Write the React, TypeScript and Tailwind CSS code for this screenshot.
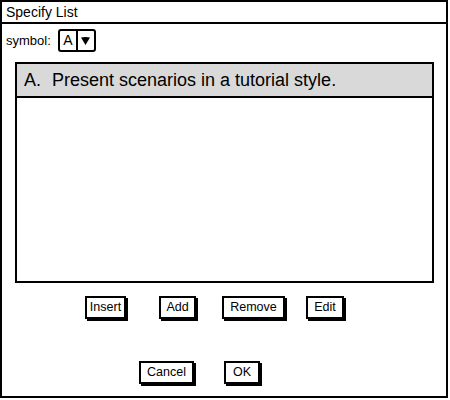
import React from "react";

const SketchButton = ({ label, className = "" }: { label: string; className?: string }) => (
  <div
    className={`h-[23px] flex items-center justify-center border-2 border-black bg-white text-[12.5px] text-black shadow-[2px_2px_0_#000] ${className}`}
  >
    {label}
  </div>
);

export default function App() {
  return (
    <div className="w-[450px] h-[400px] bg-white font-['Liberation_Sans',Arial,sans-serif]">
      <div className="w-[448px] h-[398px] border-2 border-black flex flex-col">
        <div className="h-[22px] shrink-0 border-b-2 border-black flex items-center px-[4px] text-[14px] text-black">
          Specify List
        </div>

        <div className="flex items-center gap-[7px] pl-[4px] mt-[5px] h-[23px]">
          <span className="text-[13px] text-black">symbol:</span>
          <div className="flex h-[23px] border-2 border-black rounded-[3px]">
            <div className="w-[18px] flex items-center justify-center text-[14px] border-r-2 border-black">A</div>
            <div className="w-[16px] flex items-center justify-center">
              <svg width="11" height="10" viewBox="0 0 11 10">
                <path d="M1 1.5 C3.5 0.8 7.5 0.8 10 1.5 L5.5 9 Z" fill="#000" />
              </svg>
            </div>
          </div>
        </div>

        <div className="ml-[13px] mt-[10px] w-[419px] h-[221px] border-2 border-black flex flex-col">
          <div className="h-[34px] shrink-0 bg-[#d9d9d9] border-b-2 border-black flex items-center pl-[7px] text-[18px] text-black">
            <span className="w-[28px]">A.</span>
            <span>Present scenarios in a tutorial style.</span>
          </div>
          <div className="flex-1 bg-white" />
        </div>

        <div className="flex mt-[13px] h-[25px]">
          <SketchButton label="Insert" className="ml-[83px] w-[41px]" />
          <SketchButton label="Add" className="ml-[33px] w-[37px]" />
          <SketchButton label="Remove" className="ml-[26px] w-[63px]" />
          <SketchButton label="Edit" className="ml-[21px] w-[38px]" />
        </div>

        <div className="flex mt-[40px]">
          <SketchButton label="Cancel" className="ml-[137px] w-[55px]" />
          <SketchButton label="OK" className="ml-[30px] w-[36px]" />
        </div>
      </div>
    </div>
  );
}
